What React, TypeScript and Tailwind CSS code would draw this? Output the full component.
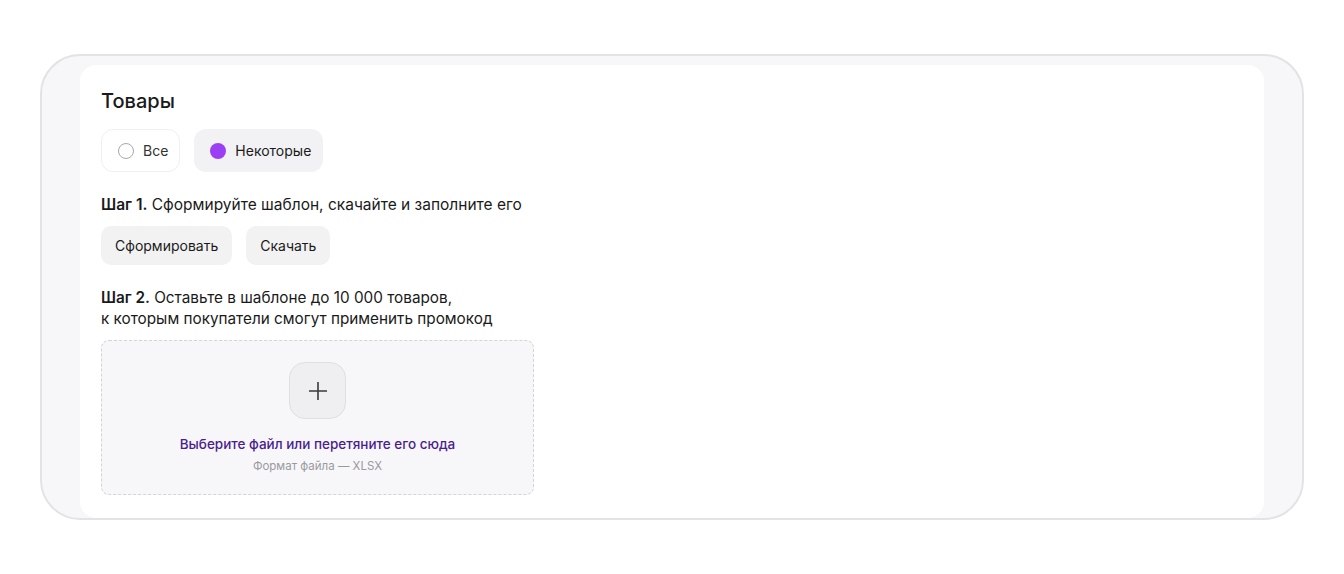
import { useState } from 'react';

export default function App() {
  const [mode, setMode] = useState<'all' | 'some'>('some');

  return (
    <div className="min-h-screen bg-white pt-[54px] px-[40px]" style={{ fontFamily: 'Inter, "Noto Sans", sans-serif' }}>
      <div className="h-[466px] rounded-[40px] border-2 border-[#e3e3e5] bg-[#f7f7f9] overflow-hidden pt-[9px] px-[38px]">
        <div className="bg-white rounded-2xl h-full pl-[21px] pt-[22px] text-[#1a1a1a]">
          <h2 className="text-[20px] leading-[28px] font-medium">Товары</h2>

          <div className="flex gap-[14px] mt-[14px]">
            <button
              onClick={() => setMode('all')}
              className={`h-[43px] pl-4 pr-[11px] rounded-xl flex items-center gap-[9px] text-[14px] ${mode === 'all' ? 'bg-[#f2f2f5]' : 'bg-white border border-[#f0f0f2]'}`}
            >
              {mode === 'all'
                ? <span className="w-4 h-4 rounded-full bg-[#9b3ff5]" />
                : <span className="w-4 h-4 rounded-full border-[1.5px] border-[#a8a8ac]" />}
              <span className="text-[#333]">Все</span>
            </button>
            <button
              onClick={() => setMode('some')}
              className={`h-[43px] pl-4 pr-3 rounded-xl flex items-center gap-[9px] text-[14px] ${mode === 'some' ? 'bg-[#f2f2f5]' : 'bg-white border border-[#f0f0f2]'}`}
            >
              {mode === 'some'
                ? <span className="w-4 h-4 rounded-full bg-[#9b3ff5]" />
                : <span className="w-4 h-4 rounded-full border-[1.5px] border-[#a8a8ac]" />}
              <span className="text-[#1a1a1a]">Некоторые</span>
            </button>
          </div>

          <p className="mt-[22px] text-[15.5px] leading-[22px]">
            <span className="font-semibold">Шаг 1.</span> Сформируйте шаблон, скачайте и заполните его
          </p>

          <div className="flex gap-[14px] mt-[10px]">
            <button className="h-[39px] px-[14px] rounded-[10px] bg-[#f2f2f3] text-[14px]">Сформировать</button>
            <button className="h-[39px] px-[14px] rounded-[10px] bg-[#f2f2f3] text-[14px]">Скачать</button>
          </div>

          <p className="mt-[22px] text-[15.3px] leading-[21px]">
            <span className="font-semibold">Шаг 2.</span> Оставьте в шаблоне до 10 000 товаров,
            <br />к которым покупатели смогут применить промокод
          </p>

          <div className="mt-[11px] w-[433px] h-[155px] rounded-lg border border-dashed border-[#d4d4d8] bg-[#f7f7f9] flex flex-col items-center pt-[21px]">
            <div className="w-[57px] h-[57px] rounded-2xl border border-[#e0e0e3] bg-[#efeff2] flex items-center justify-center">
              <svg width="20" height="20" viewBox="0 0 20 20" fill="none" stroke="#3a3a3c" strokeWidth="1.6">
                <path d="M10 1v18M1 10h18" />
              </svg>
            </div>
            <p className="mt-[15px] text-[13.5px] leading-[20px] text-[#4b1d8f] font-medium">Выберите файл или перетяните его сюда</p>
            <p className="mt-[4px] text-[11.5px] leading-[16px] text-[#9a9a9e]">Формат файла — XLSX</p>
          </div>
        </div>
      </div>
    </div>
  );
}
